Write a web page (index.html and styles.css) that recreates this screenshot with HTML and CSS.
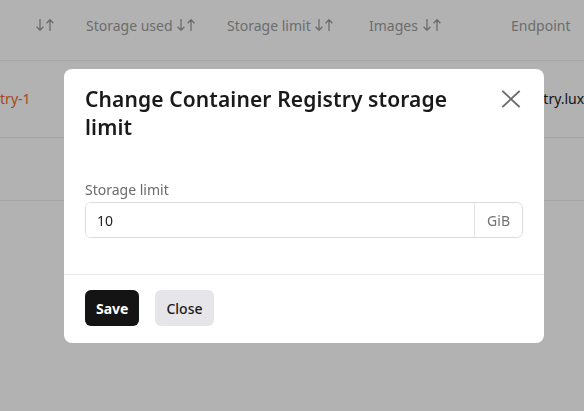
FILE: index.html
```html
<!DOCTYPE html>
<html lang="en">
<head>
<meta charset="utf-8">
<title>Change Container Registry storage limit</title>
<link rel="stylesheet" href="styles.css">
</head>
<body>
<div class="page">
  <div class="table">
    <div class="row head">
      <div class="cell first"><svg class="sort" width="19" height="12" viewBox="0 0 19 12"><path d="M4 0 V11.3 M0.6 7.8 L4 11.3 L7.4 7.8 M14 12 V0.7 M10.6 4.2 L14 0.7 L17.4 4.2" /></svg></div>
      <div class="cell">Storage used <svg class="sort" width="19" height="12" viewBox="0 0 19 12"><path d="M4 0 V11.3 M0.6 7.8 L4 11.3 L7.4 7.8 M14 12 V0.7 M10.6 4.2 L14 0.7 L17.4 4.2" /></svg></div>
      <div class="cell">Storage limit <svg class="sort" width="19" height="12" viewBox="0 0 19 12"><path d="M4 0 V11.3 M0.6 7.8 L4 11.3 L7.4 7.8 M14 12 V0.7 M10.6 4.2 L14 0.7 L17.4 4.2" /></svg></div>
      <div class="cell">Images <svg class="sort" width="19" height="12" viewBox="0 0 19 12"><path d="M4 0 V11.3 M0.6 7.8 L4 11.3 L7.4 7.8 M14 12 V0.7 M10.6 4.2 L14 0.7 L17.4 4.2" /></svg></div>
      <div class="cell">Endpoint</div>
    </div>
    <div class="row body-row">
      <div class="cell link">my-registry-1</div>
      <div class="cell"></div>
      <div class="cell"></div>
      <div class="cell"></div>
      <div class="cell">registry.luxembourg.example</div>
    </div>
    <div class="row body-row"></div>
  </div>
</div>

<div class="overlay">
  <div class="modal" role="dialog" aria-labelledby="modal-title">
    <div class="modal-header">
      <h2 id="modal-title" class="modal-title">Change Container Registry storage limit</h2>
      <button class="close-btn" aria-label="Close">
        <svg width="24" height="24" viewBox="0 0 24 24"><path d="M4 4.5 L20 19.5 M20 4.5 L4 19.5" stroke="#6b6b6b" stroke-width="1.8" fill="none" stroke-linecap="square"/></svg>
      </button>
    </div>
    <div class="modal-body">
      <label class="field-label" for="limit">Storage limit</label>
      <div class="input-group">
        <input id="limit" class="input" type="text" value="10">
        <span class="addon">GiB</span>
      </div>
    </div>
    <div class="modal-footer">
      <button class="btn btn-primary">Save</button>
      <button class="btn btn-secondary">Close</button>
    </div>
  </div>
</div>
</body>
</html>
```

FILE: styles.css
```css
html, body {
  margin: 0;
  padding: 0;
  background: #ffffff;
  font-family: "Noto Sans", "Open Sans", sans-serif;
  font-size: 14px;
  color: #222222;
  overflow: hidden;
}

.page {
  width: 584px;
  height: 411px;
  overflow: hidden;
}

.table {
  margin-left: -57px;
  width: 720px;
}

.row {
  display: grid;
  grid-template-columns: 143px 141px 142px 142px 152px;
  border-bottom: 1px solid #ececec;
}

.row.head {
  height: 61px;
  box-sizing: border-box;
  padding-top: 16px;
  color: #9c9c9c;
  line-height: 20px;
}

.cell.first {
  text-align: right;
  padding-right: 31px;
}

.sort {
  vertical-align: baseline;
  margin-left: 1px;
}

.sort path {
  stroke: #9c9c9c;
  stroke-width: 1.3;
  fill: none;
}

.row.body-row {
  height: 77px;
  box-sizing: border-box;
  align-items: center;
  line-height: 20px;
  color: #222222;
}

.row.body-row:last-child {
  height: 63px;
}

.cell {
  white-space: nowrap;
}

.link {
  color: #ee6b25;
}

.overlay {
  position: fixed;
  inset: 0;
  background: rgba(0, 0, 0, 0.3);
  display: flex;
  align-items: flex-start;
  justify-content: flex-start;
  padding: 69px 0 0 64px;
}

.modal {
  width: 480px;
  background: #ffffff;
  border-radius: 8px;
  overflow: hidden;
}

.modal-header {
  display: flex;
  align-items: flex-start;
  gap: 16px;
  padding: 16px 21px 16px 21px;
}

.modal-title {
  flex: 1;
  margin: 0;
  font-size: 21px;
  line-height: 28px;
  font-weight: 600;
  letter-spacing: 0.12px;
  color: #1a1a1a;
}

.close-btn {
  width: 24px;
  height: 28px;
  padding: 0;
  border: 0;
  background: transparent;
  display: flex;
  align-items: center;
  justify-content: center;
  cursor: pointer;
}

.modal-body {
  padding: 23px 21px 36px 21px;
  display: flex;
  flex-direction: column;
}

.field-label {
  font-size: 14px;
  line-height: 20px;
  color: #6b6b6b;
  margin-bottom: 2px;
}

.input-group {
  display: flex;
  height: 36px;
  box-sizing: border-box;
  border: 1px solid #dcdcdc;
  border-radius: 6px;
  overflow: hidden;
}

.input {
  flex: 1;
  min-width: 0;
  border: 0;
  outline: none;
  padding: 0 11px;
  font-family: inherit;
  font-size: 14px;
  color: #1f1f1f;
  background: #ffffff;
}

.addon {
  display: flex;
  align-items: center;
  padding: 0 12px;
  border-left: 1px solid #e2e2e2;
  color: #727272;
  font-size: 14px;
}

.modal-footer {
  border-top: 1px solid #e7e7ee;
  padding: 15px 21px 17px 21px;
  display: flex;
  gap: 16px;
}

.btn {
  height: 36px;
  padding: 0 11px;
  border: 0;
  border-radius: 6px;
  font-family: inherit;
  font-size: 14px;
  cursor: pointer;
}

.btn-primary {
  background: #141414;
  color: #ffffff;
  font-weight: 700;
}

.btn-secondary {
  background: #e6e5ea;
  color: #1a1a1a;
  font-weight: 500;
}
```
